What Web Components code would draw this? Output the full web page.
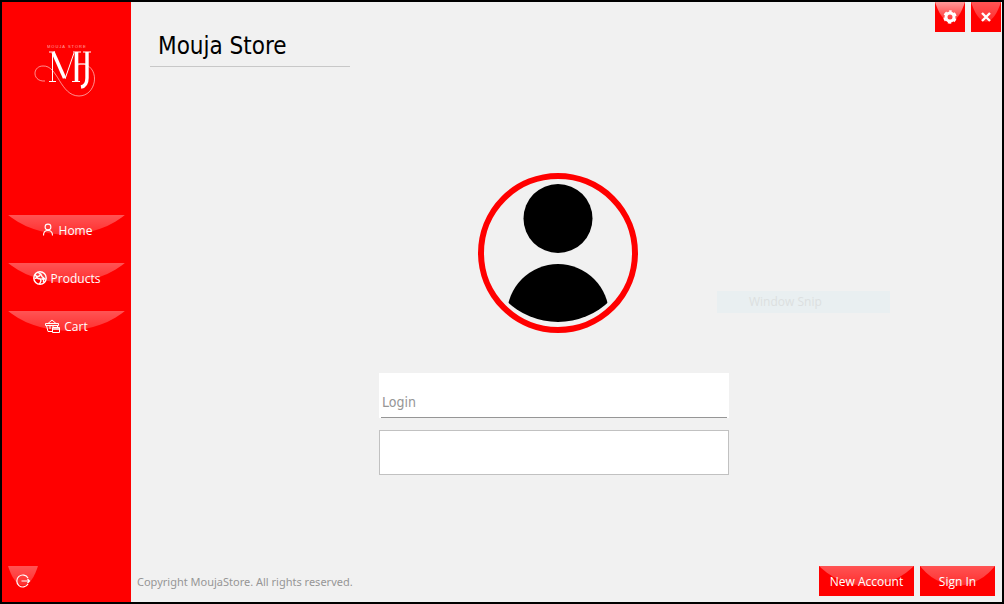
<!DOCTYPE html>
<html lang="en">
<head>
<meta charset="utf-8">
<title>Mouja Store</title>
<style>
html, body { height: 100%; margin: 0; }
body { font: 12px/16px "Open Sans", "Noto Sans", sans-serif; color: #000; }
</style>
</head>
<body>
<store-window></store-window>
<script>
const icons = {
  user: '<svg width="14" height="14" viewBox="0 0 14 14" fill="none" stroke="#fff" stroke-width="1.1"><circle cx="7" cy="4" r="2.9"/><path d="M2.500 12.500C2.500 9 4 7.500 7 7.500S11.500 9 11.500 12.500"/></svg>',
  globe: '<svg width="14" height="14" viewBox="0 0 14 14" fill="none" stroke="#fff" stroke-width="1.400"><circle cx="7" cy="7" r="6.200"/><path d="M5 1.500 7.500 3 6.500 5 4 5.500 3.500 7 1.500 7.500M2 3.500 5 7.500 7.500 8 8 10 6.500 13M7.500 2.500 9 5.500 12.500 8.500M8.500 7.500 10.500 8.500 10.500 11.500"/></svg>',
  cart: '<svg width="15" height="14" viewBox="0 0 15 14" fill="none" stroke="#fff"><path d="M3 4.500 7 1 11 4.500M.5 4.500H13.500V6.500H.5ZM1.500 6.500 3 12.500H7M5 7V10M8 7V8M12.500 6.500V8"/><path d="M7.500 8.500H14.500V13.500H7.500Z"/><path fill="#fff" fill-opacity=".7" d="M8 9H14V11H8Z" stroke="none"/></svg>',
  exit: '<svg width="15" height="14" viewBox="0 0 15 14" fill="none" stroke="#fff" stroke-width="1.200"><path d="M12 4A6 6 0 1 0 12 10M5.500 7H13.500M11.500 5 13.500 7 11.500 9"/></svg>',
  gear: '<svg width="14" height="14" viewBox="0 0 14 14"><g fill="none" stroke="#fff"><circle cx="7" cy="7" r="4" stroke-width="3"/><circle cx="7" cy="7" r="5.700" stroke-width="2" stroke-dasharray="3.400 2.570" stroke-dashoffset="1.700" transform="rotate(-90 7 7)"/></g></svg>',
  close: '<svg width="10" height="10" viewBox="0 0 10 10"><path d="M1 1 9 9M9 1 1 9" stroke="#fff" stroke-width="2.400"/></svg>'
};

function define(name, render) {
  customElements.define(name, class extends HTMLElement {
    connectedCallback() {
      if (!this.shadowRoot) this.attachShadow({ mode: 'open' }).innerHTML = render(this);
    }
  });
}

define('gloss-button', el => `
<style>
:host { display: block; }
button { position: relative; width: 100%; height: 30px; box-sizing: border-box; display: flex; align-items: center; justify-content: center;
  gap: 4px; margin: 0; padding: 0; border: 0; background: #f00; color: #fff; font: inherit; white-space: nowrap; }
button::before { content: ""; position: absolute; inset: 0;
  background: linear-gradient(rgba(255,255,255,var(--gloss, .33)), rgba(255,255,255,.18) 66%);
  clip-path: ellipse(75% 260% at 50% -194%); }
svg, span { position: relative; flex: none; }
span { padding-top: 2px; }
svg { display: block; }
</style>
<button aria-label="${el.getAttribute('label') || el.textContent}">${icons[el.getAttribute('icon')] || ''}${el.textContent ? '<span><slot></slot></span>' : ''}</button>`);

define('store-logo', () => `
<style>
:host { display: block; width: 62px; height: 56px; }
svg { display: block; }
.name { font: 4px "Liberation Sans", sans-serif; letter-spacing: 1px; fill: #fff; opacity: .6; }
</style>
<svg width="62" height="56" viewBox="0 0 62 56" role="img" aria-label="Mouja Store">
<text class="name" x="13" y="4">MOUJA STORE</text>
<g fill="none" stroke="#fff">
<path d="M15 8H21M39 8H47M49 8H57M15 37.500H22M38 37.500H46"/>
<path d="M18.500 9V37M31 35 40 9" stroke-width="1"/>
<path d="M19 8 30.500 34" stroke-width="3.400"/>
<path d="M42.500 8V37" stroke-width="3.600"/>
<path d="M53 8V34Q53 42 47 43" stroke-width="3.400"/>
<path d="M44 20H52"/>
<path d="M11 37C-2 38-2 22 9 22C24 21 26 52 45 52C62 52 67 25 50 20Q46 19 42 22" stroke-width=".7" opacity=".8"/>
</g></svg>`);

define('side-bar', () => `
<style>
:host { display: flex; flex-direction: column; background: #f00; box-sizing: border-box; padding: 42px 6px 6px; }
store-logo { margin-left: 26px; }
nav { display: grid; gap: 18px; margin-top: 115px; }
.exit { width: 30px; margin-top: auto; }
</style>
<store-logo></store-logo>
<nav>
<gloss-button icon="user">Home</gloss-button>
<gloss-button icon="globe">Products</gloss-button>
<gloss-button icon="cart">Cart</gloss-button>
</nav>
<gloss-button class="exit" icon="exit" label="Log out"></gloss-button>`);

define('user-avatar', () => `
<style>:host { display: block; } svg { display: block; }</style>
<svg width="160" height="160" viewBox="0 0 160 160" role="img" aria-label="User">
<clipPath id="c"><circle cx="80" cy="75" r="74"/></clipPath>
<circle cx="80" cy="80" r="77" fill="none" stroke="#f00" stroke-width="6"/>
<circle cx="80" cy="45.500" r="34.500"/>
<circle cx="80" cy="142" r="51" clip-path="url(#c)"/>
</svg>`);

define('login-form', () => `
<style>
:host { display: block; }
form { display: grid; gap: 12px; }
input { display: block; width: 100%; height: 45px; box-sizing: border-box; margin: 0; border: 1px solid #c1c1c1; border-radius: 0;
  background: #fff; font: 14px/20px "DejaVu Sans Condensed", "DejaVu Sans", sans-serif; padding: 0 8px; outline: 0; }
.login { border: 0; padding: 12px 3px 0; background: linear-gradient(#969696, #969696) 50% 100% / calc(100% - 4px) 1px no-repeat #fff; }
::placeholder { color: #969696; opacity: 1; }
</style>
<form>
<input class="login" type="text" placeholder="Login" aria-label="Login">
<input type="password" aria-label="Password">
</form>`);

define('store-window', () => `
<style>
:host { display: grid; grid-template-columns: 129px 1fr; min-height: 100vh; box-sizing: border-box; border: 2px solid #000; background: #f1f1f1; }
main { position: relative; display: flex; flex-direction: column; }
header { display: flex; justify-content: space-between; align-items: flex-start; }
h1 { margin: 24px 0 0 19px; padding: 2px 8px; width: 184px; border-bottom: 1px solid #c8c8c8; font: 24px/36px "DejaVu Sans Condensed", "DejaVu Sans", sans-serif; }
.tools { display: flex; gap: 6px; margin-right: 1px; }
.tools gloss-button { width: 30px; }
.gear { --gloss: .6; }
.center { width: 350px; margin: 106px auto 0; padding-right: 25px; }
user-avatar { width: 160px; margin: 0 auto 40px 99px; }
footer { margin-top: auto; padding: 0 7px 6px 6px; display: flex; align-items: center; gap: 6px; }
footer p { margin: 0 auto 0 0; padding-top: 2px; color: #969696; font: 11px/16px "Noto Sans", sans-serif; }
.new { width: 95px; }
.sign { width: 75px; }
.snip { position: absolute; left: 586px; top: 289px; width: 141px; height: 22px; padding-left: 32px; background: #e9eff1; color: #dcdfe0; line-height: 22px; }
</style>
<side-bar></side-bar>
<main>
<header><h1>Mouja Store</h1>
<div class="tools"><gloss-button class="gear" icon="gear" label="Settings"></gloss-button><gloss-button icon="close" label="Close"></gloss-button></div></header>
<div class="center"><user-avatar></user-avatar><login-form></login-form></div>
<div class="snip">Window Snip</div>
<footer><p>Copyright MoujaStore. All rights reserved.</p>
<gloss-button class="new">New Account</gloss-button><gloss-button class="sign">Sign In</gloss-button></footer>
</main>`);
</script>
</body>
</html>
